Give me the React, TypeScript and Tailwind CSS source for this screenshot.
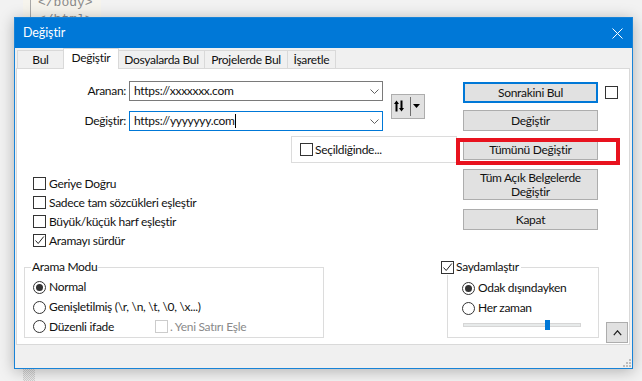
import React from 'react';

function Check({ checked = false, disabled = false }: { checked?: boolean; disabled?: boolean }) {
  return (
    <span
      className={`inline-flex w-[13px] h-[13px] shrink-0 items-center justify-center border bg-white ${
        disabled ? 'border-[#cccccc]' : 'border-[#333333]'
      }`}
    >
      {checked && (
        <svg width="11" height="11" viewBox="0 0 11 11">
          <path d="M1.5 5.5 L4.2 8.5 L9.8 1.5" fill="none" stroke="#222" strokeWidth="1" />
        </svg>
      )}
    </span>
  );
}

function Radio({ checked = false }: { checked?: boolean }) {
  return (
    <span className="inline-flex w-[13px] h-[13px] shrink-0 items-center justify-center rounded-full border border-[#333333] bg-white">
      {checked && <span className="w-[7px] h-[7px] rounded-full bg-[#333333]" />}
    </span>
  );
}

function Combo({ value, focused = false }: { value: string; focused?: boolean }) {
  return (
    <div
      className={`flex items-center w-[254px] h-[20px] bg-white border ${
        focused ? 'border-[#0078d7]' : 'border-[#7a7a7a]'
      }`}
    >
      <span className="pl-[4px] flex-1 flex items-center leading-none whitespace-nowrap">
        {value}
        {focused && <span className="inline-block w-px h-[14px] bg-black" />}
      </span>
      <svg width="9" height="5" viewBox="0 0 9 5" className="mr-[3px]">
        <path d="M0.5 0.5 L4.5 4.5 L8.5 0.5" stroke="#606060" fill="none" strokeWidth="1" />
      </svg>
    </div>
  );
}

function Btn({
  children,
  className = '',
  focused = false,
}: {
  children: React.ReactNode;
  className?: string;
  focused?: boolean;
}) {
  return (
    <div
      className={`flex items-center justify-center text-center leading-[14px] bg-[#e1e1e1] ${
        focused ? 'border-2 border-[#0078d7]' : 'border border-[#adadad]'
      } ${className}`}
    >
      {children}
    </div>
  );
}

function Tab({ label, w, selected = false, first = false }: { label: string; w: string; selected?: boolean; first?: boolean }) {
  return (
    <div
      className={`flex items-center justify-center whitespace-nowrap border-t border-l border-r border-[#d9d9d9] ${w} ${
        first ? '' : '-ml-[1px]'
      } ${selected ? 'h-[21px] -mb-[1px] bg-white relative z-10 pb-[3px]' : 'h-[18px] bg-[#f0f0f0]'}`}
    >
      {label}
    </div>
  );
}

export default function App() {
  return (
    <div className="relative w-[642px] h-[381px] overflow-hidden bg-[#f2f2f2] font-['Lato',sans-serif] font-normal text-[12px] tracking-[-0.3px] text-[#111111]">
      {/* background editor */}
      <div className="flex flex-col ml-[23px] w-[78px] h-[381px]">
        <div className="flex h-[368px] bg-[#f6f4ed]">
          <div className="w-[7px]" />
          <div className="w-px bg-[#a8a8a8]" />
          <div className="pl-[7px] -mt-[6px] font-['Liberation_Mono',monospace] text-[13px] tracking-normal leading-[17px] text-[#8a8a8a]">
            <div>&lt;/body&gt;</div>
            <div>&lt;/html&gt;</div>
          </div>
        </div>
        <div className="w-[12px] h-[13px] bg-[repeating-conic-gradient(#cfcfcf_0_25%,#ededed_0_50%)] bg-size-[2px_2px]" />
      </div>

      {/* dialog */}
      <div className="absolute left-[14px] top-[17px] w-[619px] h-[352px] border border-[#1883d7] bg-[#f0f0f0] flex flex-col shadow-[0_2px_14px_rgba(0,0,0,0.28)]">
        <div className="h-[30px] shrink-0 bg-[#0078d7] flex items-center justify-between pl-[8px] pr-[9px] text-white">
          <span className="text-[12.5px] tracking-[-0.1px]">Değiştir</span>
          <svg width="11" height="11" viewBox="0 0 11 11">
            <path d="M0.5 0.5 L10.5 10.5 M10.5 0.5 L0.5 10.5" stroke="white" strokeWidth="1" />
          </svg>
        </div>

        {/* tabs */}
        <div className="h-[20px] shrink-0 flex items-end pl-[2px]">
          <Tab label="Bul" w="w-[47px]" first />
          <Tab label="Değiştir" w="w-[56px]" selected />
          <Tab label="Dosyalarda Bul" w="w-[87px]" />
          <Tab label="Projelerde Bul" w="w-[84px]" />
          <Tab label="İşaretle" w="w-[49px]" />
        </div>

        {/* panel */}
        <div className="ml-[1px] w-[614px] h-[277px] shrink-0 bg-white border border-[#d9d9d9] flex flex-col">
          <div className="flex h-[181px] shrink-0">
            {/* left column */}
            <div className="w-[446px] flex flex-col pt-[12px]">
              <div className="flex items-center">
                <div className="flex flex-col gap-[10px]">
                  <div className="flex items-center">
                    <span className="w-[112px] pr-[3px] text-right">Aranan:</span>
                    <Combo value="https://xxxxxxx.com" />
                  </div>
                  <div className="flex items-center">
                    <span className="w-[112px] pr-[3px] text-right">Değiştir:</span>
                    <Combo value="https://yyyyyyy.com" focused />
                  </div>
                </div>
                <div className="ml-[8px] w-[34px] h-[25px] bg-[#e1e1e1] border border-[#adadad] flex items-center pl-[2px]">
                  <svg width="10" height="12" viewBox="0 0 10 12">
                    <path d="M2.5 11.5 V2.5" stroke="#000" strokeWidth="2" />
                    <path d="M0 4 L2.5 0.5 L5 4 Z" fill="#000" />
                    <path d="M7.5 0.5 V9.5" stroke="#000" strokeWidth="2" />
                    <path d="M5 8 L7.5 11.5 L10 8 Z" fill="#000" />
                  </svg>
                  <div className="w-px h-[19px] bg-[#6e6e6e] ml-[6px]" />
                  <svg width="7" height="4" viewBox="0 0 7 4" className="ml-[2px]">
                    <path d="M0 0 H7 L3.5 4 Z" fill="#000" />
                  </svg>
                </div>
              </div>

              <div className="mt-[5px] ml-[274px] w-[166px] h-[27px] border border-[#dcdcdc] flex items-center pl-[8px] gap-[2px]">
                <Check />
                <span>Seçildiğinde...</span>
              </div>

              <div className="mt-[11px] ml-[16px] flex flex-col">
                {[
                  ['Geriye Doğru', false],
                  ['Sadece tam sözcükleri eşleştir', false],
                  ['Büyük/küçük harf eşleştir', false],
                  ['Aramayı sürdür', true],
                ].map(([t, c]) => (
                  <div key={t as string} className="h-[19px] flex items-center gap-[3px]">
                    <Check checked={c as boolean} />
                    <span>{t as string}</span>
                  </div>
                ))}
              </div>
            </div>

            {/* right column */}
            <div className="flex pt-[13px]">
              <div className="w-[135px] flex flex-col">
                <Btn focused className="h-[21px]">Sonrakini Bul</Btn>
                <Btn className="h-[21px] mt-[7px]">Değiştir</Btn>
                <Btn className="h-[21px] mt-[8px]">Tümünü Değiştir</Btn>
                <Btn className="h-[31px] mt-[9px]">
                  Tüm Açık Belgelerde
                  <br />
                  Değiştir
                </Btn>
                <Btn className="h-[21px] mt-[9px]">Kapat</Btn>
              </div>
              <div className="ml-[7px] mt-[4px]">
                <Check />
              </div>
            </div>
          </div>

          {/* bottom groups */}
          <div className="flex mt-[9px]">
            <fieldset className="ml-[7px] w-[300px] h-[79px] border border-[#dcdcdc] pl-[6px]">
              <legend className="px-[1px] leading-[16px]">Arama Modu</legend>
              <div className="mt-[2px] flex flex-col">
                <div className="h-[20px] flex items-center gap-[3px] ml-[2px]">
                  <Radio checked />
                  <span>Normal</span>
                </div>
                <div className="h-[20px] flex items-center gap-[3px] ml-[2px]">
                  <Radio />
                  <span>Genişletilmiş (\r, \n, \t, \0, \x...)</span>
                </div>
                <div className="h-[19px] flex items-center ml-[2px]">
                  <div className="w-[122px] flex items-center gap-[3px]">
                    <Radio />
                    <span>Düzenli ifade</span>
                  </div>
                  <div className="flex items-center gap-[2px] text-[#8a8a8a]">
                    <Check disabled />
                    <span>. Yeni Satırı Eşle</span>
                  </div>
                </div>
              </div>
            </fieldset>

            <fieldset className="ml-[123px] w-[152px] h-[79px] border border-[#dcdcdc]">
              <legend className="-ml-[7px] pr-[2px] leading-[16px] flex items-center gap-[2px]">
                <Check checked />
                <span>Saydamlaştır</span>
              </legend>
              <div className="pl-[14px] mt-[3px] flex flex-col">
                <div className="h-[20px] flex items-center gap-[3px]">
                  <Radio checked />
                  <span>Odak dışındayken</span>
                </div>
                <div className="h-[20px] flex items-center gap-[3px]">
                  <Radio />
                  <span>Her zaman</span>
                </div>
                <div className="relative mt-[2px] ml-[1px] w-[118px] h-[10px]">
                  <div className="absolute left-0 right-0 top-[3px] h-[4px] bg-[#e7eaea] border border-[#d6d6d6]" />
                  <div className="absolute left-[82px] top-0 w-[5px] h-[10px] bg-[#0078d7]" />
                </div>
              </div>
            </fieldset>

            <div className="ml-[7px] mt-[63px] w-[22px] h-[21px] bg-[#e1e1e1] border border-[#adadad] flex items-center justify-center">
              <svg width="9" height="6" viewBox="0 0 9 6">
                <path d="M0.8 5.2 L4.5 0.8 L8.2 5.2" stroke="#222" fill="none" strokeWidth="1.2" />
              </svg>
            </div>
          </div>
        </div>

        {/* bottom strip with grip */}
        <div className="flex-1 flex items-end justify-end pr-[1px] pb-[1px]">
          <svg width="9" height="9" viewBox="0 0 9 9">
            <rect x="7" y="1" width="2" height="2" fill="#bdbdbd" />
            <rect x="4" y="4" width="2" height="2" fill="#bdbdbd" />
            <rect x="7" y="4" width="2" height="2" fill="#bdbdbd" />
            <rect x="1" y="7" width="2" height="2" fill="#bdbdbd" />
            <rect x="4" y="7" width="2" height="2" fill="#bdbdbd" />
            <rect x="7" y="7" width="2" height="2" fill="#bdbdbd" />
          </svg>
        </div>
      </div>

      {/* red annotation */}
      <div className="absolute left-[456px] top-[138px] w-[164px] h-[27px] border-[4px] border-[#e8121e]" />
    </div>
  );
}
